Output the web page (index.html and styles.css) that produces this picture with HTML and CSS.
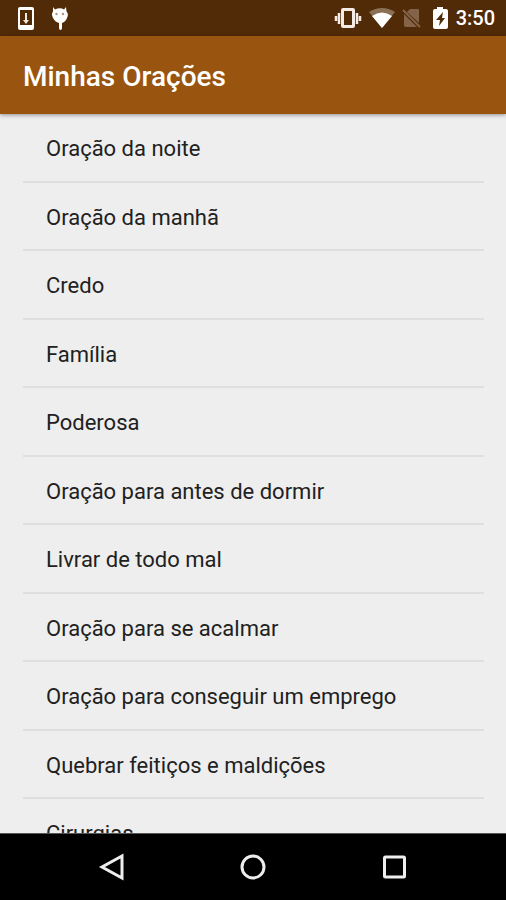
FILE: index.html
```
<!DOCTYPE html>
<html lang="pt-BR">
<head>
  <meta charset="UTF-8" />
  <meta name="viewport" content="width=device-width, initial-scale=1" />
  <title>Minhas Orações</title>
  <link rel="stylesheet" href="styles.css">
</head>
<body>

  <div class="status-bar">
    <div class="status-left">
      <svg width="18" height="24" viewBox="0 0 18 24">
        <path fill="#fff" fill-rule="evenodd" d="M2 1h12q2 0 2 2v19q0 2-2 2H2q-2 0-2-2V3q0-2 2-2zM2 4v15h12V4z" />
        <path fill="#f3e8df" d="M7 7h2v7h2l-3 4-3-4h2z" />
      </svg>
      <svg width="18" height="24" viewBox="0 0 18 24">
        <path fill="#fff" d="M2 1l2 2.500Q9 1 13 3.500L15 1l.5 4.500Q18 8 16 12q-1.500 4-5 5v5q0 2-1.500 2T8 22v-5q-4-1-6-5Q0 8 2 5.500z" />
        <circle cx="5.500" cy="8" r="1.200" fill="#a89480" />
        <circle cx="12" cy="8" r="1.200" fill="#a89480" />
      </svg>
    </div>
    <div class="status-right">
      <svg width="28" height="22" viewBox="0 0 28 22">
        <path fill="#f3ebe4" fill-rule="evenodd" d="M9 1h10q2 0 2 2v16q0 2-2 2H9q-2 0-2-2V3q0-2 2-2zm1 3v14h8V4z" />
        <path stroke="#f3ebe4" stroke-width="2.500" d="M5 6v11M2 9v5M23 6v11M26 9v5" />
      </svg>
      <svg width="26" height="22" viewBox="0 0 26 22">
        <path fill="#8b7055" d="M0 5Q13-3 26 5L13 21z" />
        <path fill="#fff" d="M3 9Q13 2 23 9L13 21z" />
      </svg>
      <svg width="20" height="22" viewBox="0 0 20 22">
        <path fill="#846448" d="M8 2h8q1 0 1 1v13L5 5zM2 7l13 13H4q-2 0-2-2z" />
        <path stroke="#846448" stroke-width="2" d="M1 3l17 17" />
      </svg>
      <svg class="battery" width="16" height="22" viewBox="0 0 16 22">
        <path fill="#fff" d="M4 0h6v2h3q2 0 2 2v16q0 2-2 2H2q-2 0-2-2V4q0-2 2-2h2z" />
        <path fill="#512b08" d="M10 5l-7 8h4l-1 6 6-8H9z" />
      </svg>
      <span class="clock">3:50</span>
    </div>
  </div>

  <header class="app-bar">
    <h1>Minhas Orações</h1>
  </header>

  <main>
    <ul class="prayers">
      <li>Oração da noite</li>
      <li>Oração da manhã</li>
      <li>Credo</li>
      <li>Família</li>
      <li>Poderosa</li>
      <li>Oração para antes de dormir</li>
      <li>Livrar de todo mal</li>
      <li>Oração para se acalmar</li>
      <li>Oração para conseguir um emprego</li>
      <li>Quebrar feitiços e maldições</li>
      <li>Cirurgias</li>
    </ul>
  </main>

  <nav class="nav-bar">
    <button type="button" aria-label="Voltar">
      <svg width="28" height="28" viewBox="0 0 28 28">
        <path d="M24 3v22L4 14z" />
      </svg>
    </button>
    <button type="button" aria-label="Início">
      <svg width="28" height="28" viewBox="0 0 28 28">
        <circle cx="14" cy="14" r="11" />
      </svg>
    </button>
    <button type="button" aria-label="Recentes">
      <svg width="28" height="28" viewBox="0 0 28 28">
        <rect x="4.500" y="4" width="20" height="20" rx="1" />
      </svg>
    </button>
  </nav>

</body>
</html>
```

FILE: styles.css
```
* {
  box-sizing: border-box;
}
body {
  font-family: Roboto, sans-serif;
  background: #eee;
  color: #212121;
  margin: 0;
  height: 100vh;
  display: flex;
  flex-direction: column;
}
svg {
  display: block;
}
.status-bar {
  flex: none;
  display: flex;
  justify-content: space-between;
  align-items: center;
  height: 36px;
  padding: 0 11px 0 18px;
  background: #512b08;
  color: #fff;
}
.status-left {
  display: flex;
  gap: 15px;
}
.status-right {
  display: flex;
  align-items: center;
  gap: 7px;
}
.battery {
  margin-left: 4px;
}
.clock {
  font-size: 20px;
  font-weight: 500;
}
.app-bar {
  flex: none;
  position: relative;
  display: flex;
  align-items: center;
  height: 78px;
  padding: 2px 23px 0;
  background: #99540f;
  color: #fff;
  box-shadow: 0 1px 4px rgba(0, 0, 0, 0.4);
}
h1 {
  margin: 0;
  font-size: 28px;
  font-weight: 500;
}
main {
  flex: 1;
  min-height: 0;
  overflow-x: hidden;
  overflow-y: auto;
  scrollbar-width: none;
}
.prayers {
  list-style: none;
  margin: 0;
  padding: 0 22px 0 23px;
}
.prayers li {
  display: flex;
  align-items: center;
  min-height: 68px;
  padding: 2px 23px 0;
  border-bottom: 2px solid #dfdfdf;
  font-size: 22px;
}
.prayers li:nth-child(odd) {
  min-height: 69px;
}
.nav-bar {
  flex: none;
  display: flex;
  justify-content: center;
  gap: 113px;
  height: 67px;
  background: #000;
  border-top: 1px solid #555;
}
.nav-bar button {
  padding: 0;
  border: none;
  background: none;
  cursor: pointer;
}
.nav-bar svg {
  fill: none;
  stroke: #eee;
  stroke-width: 3;
}
```
